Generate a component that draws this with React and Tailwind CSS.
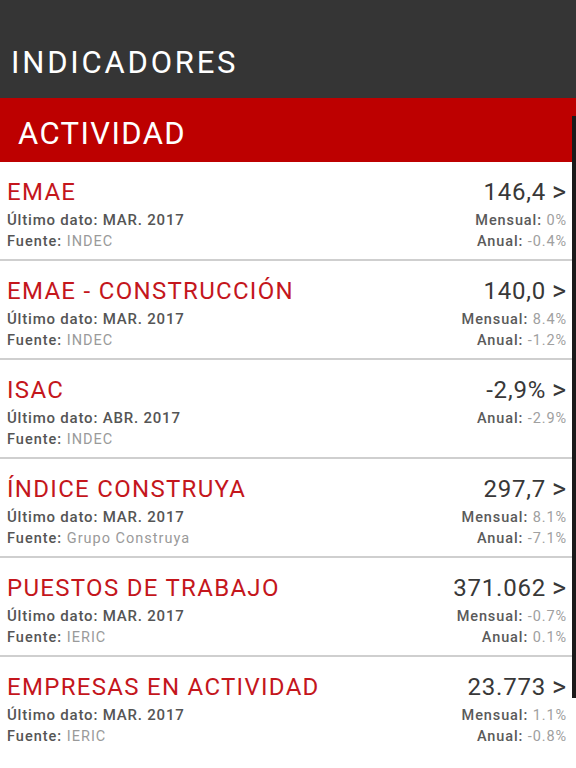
import React from "react";

const rows = [
  { title: "EMAE", fecha: "MAR. 2017", fuente: "INDEC", value: "146,4", mensual: "0%", anual: "-0.4%" },
  { title: "EMAE - CONSTRUCCIÓN", fecha: "MAR. 2017", fuente: "INDEC", value: "140,0", mensual: "8.4%", anual: "-1.2%" },
  { title: "ISAC", fecha: "ABR. 2017", fuente: "INDEC", value: "-2,9%", mensual: null, anual: "-2.9%" },
  { title: "ÍNDICE CONSTRUYA", fecha: "MAR. 2017", fuente: "Grupo Construya", value: "297,7", mensual: "8.1%", anual: "-7.1%" },
  { title: "PUESTOS DE TRABAJO", fecha: "MAR. 2017", fuente: "IERIC", value: "371.062", mensual: "-0.7%", anual: "0.1%" },
  { title: "EMPRESAS EN ACTIVIDAD", fecha: "MAR. 2017", fuente: "IERIC", value: "23.773", mensual: "1.1%", anual: "-0.8%" },
];

function Stat({ label, value }) {
  return (
    <div className="text-[14.5px] leading-[21px] tracking-[0.9px]">
      <span className="font-medium text-[#5a5a5a]">{label}:</span>{" "}
      <span className="text-[#a0a0a0]">{value}</span>
    </div>
  );
}

function Row({ r, last }) {
  return (
    <div className={"flex justify-between pl-[7px] pr-[9px] pt-4 pb-[7px] " + (last ? "" : "border-b-2 border-[#cfcfcf]")}>
      <div className="flex flex-col">
        <div className="text-[24px] leading-[28px] text-[#c4161c] tracking-[1.3px]">{r.title}</div>
        <div className="mt-1 text-[15px] leading-[21px] font-medium text-[#555] tracking-[0.8px]">Último dato: {r.fecha}</div>
        <div className="text-[14.5px] leading-[21px] tracking-[1px]">
          <span className="font-medium text-[#555]">Fuente:</span>{" "}
          <span className="text-[#9a9a9a]">{r.fuente}</span>
        </div>
      </div>
      <div className="flex flex-col items-end">
        <div className="flex items-center text-[24px] leading-[28px] text-[#383838] tracking-[0.8px]">
          <span>{r.value}</span>
          <span className="ml-[6px] text-[27px] leading-[28px]">&gt;</span>
        </div>
        <div className="mt-1">
          {r.mensual !== null ? <Stat label="Mensual" value={r.mensual} /> : <Stat label="Anual" value={r.anual} />}
        </div>
        {r.mensual !== null && <Stat label="Anual" value={r.anual} />}
      </div>
    </div>
  );
}

export default function App() {
  return (
    <div className="relative w-[576px] h-[768px] overflow-hidden bg-white" style={{ fontFamily: "Roboto, 'Noto Sans', sans-serif" }}>
      <div className="h-[98px] bg-[#353535] flex items-end pb-[17px] pl-[11px]">
        <div className="text-[31px] leading-[36px] text-white tracking-[2.8px]">INDICADORES</div>
      </div>
      <div className="h-[64px] bg-[#bd0000] flex items-center pl-[18px] pt-[7px]">
        <div className="text-[31px] leading-[36px] text-white tracking-[1.4px]">ACTIVIDAD</div>
      </div>
      <div>
        {rows.map((r, i) => (
          <Row key={i} r={r} last={i === rows.length - 1} />
        ))}
      </div>
      <div className="absolute right-0 top-[116px] w-[4px] h-[582px] bg-[#1a1a1a]"></div>
    </div>
  );
}
